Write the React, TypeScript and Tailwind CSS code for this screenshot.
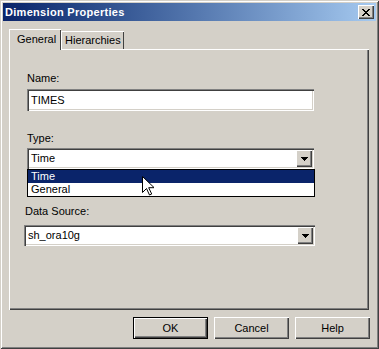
import React from "react";

const raised =
  "bg-[#d4d0c8] shadow-[inset_1px_1px_0_#fff,inset_-1px_-1px_0_#404040,inset_-2px_-2px_0_#808080]";
const sunken =
  "bg-white shadow-[inset_1px_1px_0_#808080,inset_2px_2px_0_#404040,inset_-1px_-1px_0_#fff,inset_-2px_-2px_0_#d4d0c8]";

function DownArrow() {
  return (
    <svg width="7" height="4" viewBox="0 0 7 4">
      <path d="M0 0h7v1H6v1H5v1H4v1H3V3H2V2H1V1H0z" fill="#000" />
    </svg>
  );
}

function ComboBox({ value, width }: { value: string; width: string }) {
  return (
    <div className={`${sunken} ${width} h-[21px] flex items-center pl-[4px] pr-[2px]`}>
      <span className="flex-1 leading-[13px]">{value}</span>
      <div className={`${raised} w-[16px] h-[17px] flex items-center justify-center`}>
        <DownArrow />
      </div>
    </div>
  );
}

function Button({ label, isDefault }: { label: string; isDefault?: boolean }) {
  if (isDefault) {
    return (
      <div className="w-[75px] h-[22px] border border-black">
        <div className={`${raised} w-full h-full flex items-center justify-center leading-[13px]`}>{label}</div>
      </div>
    );
  }
  return (
    <div className={`${raised} w-[75px] h-[22px] flex items-center justify-center leading-[13px]`}>{label}</div>
  );
}

export default function App() {
  return (
    <div className="w-[379px] h-[349px] bg-[#d4d0c8] font-['Liberation_Sans',Arial,sans-serif] text-[11px] text-black p-[3px] flex flex-col select-none shadow-[inset_1px_1px_0_#d4d0c8,inset_-1px_-1px_0_#404040,inset_2px_2px_0_#fff,inset_-2px_-2px_0_#808080]">
      {/* Title bar */}
      <div className="h-[18px] flex items-center justify-between bg-linear-to-r from-[#0a246a] to-[#a6caf0] pl-[2px] pr-[2px]">
        <span className="text-white font-bold tracking-[0.3px] leading-[13px]">Dimension Properties</span>
        <div className={`${raised} w-[16px] h-[14px] flex items-center justify-center`}>
          <svg width="8" height="7" viewBox="0 0 8 7">
            <path
              d="M0 0h2v1h1v1h2V1h1V0h2v1H7v1H6v1H5v1h1v1h1v1h1v1H6V6H5V5H3v1H2v1H0V6h1V5h1V4h1V3H2V2H1V1H0z"
              fill="#000"
            />
          </svg>
        </div>
      </div>

      {/* Tabs */}
      <div className="mt-[8px] ml-[6px] h-[20px] flex items-end">
        <div className="relative z-10 h-[21px] -mb-px w-[52px] pl-[8px] flex items-center bg-[#d4d0c8] shadow-[inset_1px_1px_0_#fff,inset_-1px_0_0_#404040]">
          General
        </div>
        <div className="h-[18px] w-[63px] pl-[4px] flex items-center bg-[#d4d0c8] shadow-[inset_1px_1px_0_#fff,inset_-1px_0_0_#404040]">
          Hierarchies
        </div>
      </div>

      {/* Tab panel */}
      <div className="ml-[6px] w-[360px] h-[261px] flex flex-col pl-[18px] pt-[23px] shadow-[inset_1px_1px_0_#fff,inset_-1px_-1px_0_#404040,inset_-2px_-2px_0_#808080]">
        <span className="leading-[13px]">Name:</span>
        <div className={`${sunken} mt-[4px] w-[287px] h-[22px] flex items-center pl-[4px]`}>
          <span className="leading-[13px]">TIMES</span>
        </div>

        <span className="mt-[21px] leading-[13px]">Type:</span>
        <div className="relative mt-[3px] w-[287px]">
          <ComboBox value="Time" width="w-[287px]" />
          <div className="absolute left-0 top-full z-10 w-[288px] border border-black bg-white">
            <div className="h-[13px] bg-[#0a246a] text-white pl-[3px] leading-[13px]">Time</div>
            <div className="h-[13px] pl-[3px] leading-[13px]">General</div>
          </div>
          <svg className="absolute left-[115px] top-[28px] z-20" width="12" height="20" viewBox="0 0 12 20">
            <path
              d="M0.5 0.5v16l4-4 3 6.5 2.2-1-3-6.3h5.5z"
              fill="#fff"
              stroke="#000"
              strokeWidth="1"
              strokeLinejoin="miter"
            />
          </svg>
        </div>

        <span className="mt-[36px] -ml-[2px] leading-[13px]">Data Source:</span>
        <div className="mt-[7px] -ml-[3px]">
          <ComboBox value="sh_ora10g" width="w-[291px]" />
        </div>
      </div>

      {/* Buttons */}
      <div className="mt-[7px] pr-[6px] flex justify-end gap-[6px]">
        <Button label="OK" isDefault />
        <Button label="Cancel" />
        <Button label="Help" />
      </div>
    </div>
  );
}
